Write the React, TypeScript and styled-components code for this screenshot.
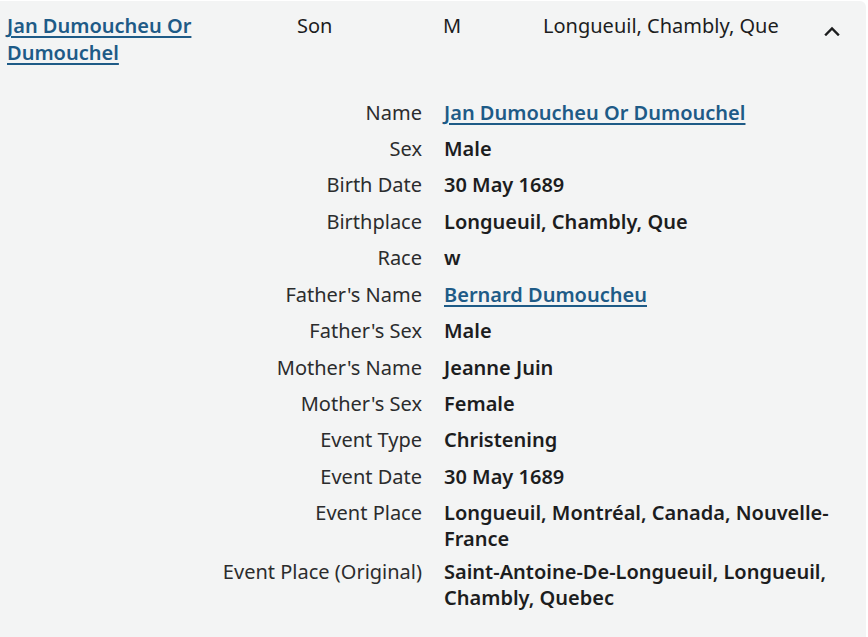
import React from 'react';
import styled, { createGlobalStyle } from 'styled-components';

const GlobalStyle = createGlobalStyle`
  html, body {
    margin: 0;
    padding: 0;
    background: #ffffff;
  }
  body {
    font-family: "Noto Sans", "Open Sans", sans-serif;
    color: #1c1d1e;
  }
`;

const Panel = styled.section`
  margin: 1px 2px 0 0;
  min-height: 636px;
  box-sizing: border-box;
  background: #f3f4f4;
  border-top-right-radius: 6px;
  font-size: 20px;
  line-height: 27px;
`;

const Summary = styled.div`
  display: grid;
  grid-template-columns: 290px 146px 100px 1fr 50px;
  padding: 11px 0 0 7px;
  align-items: start;
`;

const Cell = styled.div`
  color: #1c1d1e;
`;

const Link = styled.a`
  color: #1e5b87;
  text-decoration: underline;
  text-underline-offset: 3px;
  text-decoration-thickness: 2px;
  font-weight: 600;
  cursor: pointer;
`;

const Toggle = styled.button`
  border: none;
  background: none;
  padding: 0;
  margin: 7px 0 0 4px;
  width: 24px;
  height: 24px;
  display: flex;
  align-items: center;
  justify-content: center;
  cursor: pointer;
`;

const Details = styled.dl`
  display: grid;
  grid-template-columns: 1fr 1fr;
  grid-auto-rows: minmax(29.45px, auto);
  column-gap: 22px;
  row-gap: 7px;
  margin: 33.5px 0 0 0;
  padding: 0 0 24px 0;
  line-height: 26px;
`;

const Label = styled.dt`
  text-align: right;
  color: #2b2c2d;
  font-weight: 400;
`;

const Value = styled.dd`
  margin: 0;
  padding-right: 22px;
  font-weight: 600;
  color: #1c1d1e;
`;

type Field = { label: string; value: string; link?: boolean };

const fields: Field[] = [
  { label: 'Name', value: 'Jan Dumoucheu Or Dumouchel', link: true },
  { label: 'Sex', value: 'Male' },
  { label: 'Birth Date', value: '30 May 1689' },
  { label: 'Birthplace', value: 'Longueuil, Chambly, Que' },
  { label: 'Race', value: 'w' },
  { label: "Father's Name", value: 'Bernard Dumoucheu', link: true },
  { label: "Father's Sex", value: 'Male' },
  { label: "Mother's Name", value: 'Jeanne Juin' },
  { label: "Mother's Sex", value: 'Female' },
  { label: 'Event Type', value: 'Christening' },
  { label: 'Event Date', value: '30 May 1689' },
  { label: 'Event Place', value: 'Longueuil, Montréal, Canada, Nouvelle-France' },
  { label: 'Event Place (Original)', value: 'Saint-Antoine-De-Longueuil, Longueuil, Chambly, Quebec' },
];

const ChevronUp = () => (
  <svg width="16" height="10" viewBox="0 0 16 10" fill="none">
    <path d="M2 8.5 L8 2.5 L14 8.5" stroke="#1c1d1e" strokeWidth="2.4" strokeLinecap="square" />
  </svg>
);

const App: React.FC = () => {
  return (
    <>
      <GlobalStyle />
      <Panel>
        <Summary>
          <Cell>
            <Link>Jan Dumoucheu Or Dumouchel</Link>
          </Cell>
          <Cell>Son</Cell>
          <Cell>M</Cell>
          <Cell>Longueuil, Chambly, Que</Cell>
          <Toggle aria-label="Collapse">
            <ChevronUp />
          </Toggle>
        </Summary>
        <Details>
          {fields.map((f) => (
            <React.Fragment key={f.label}>
              <Label>{f.label}</Label>
              <Value>{f.link ? <Link>{f.value}</Link> : f.value}</Value>
            </React.Fragment>
          ))}
        </Details>
      </Panel>
    </>
  );
};

export default App;
